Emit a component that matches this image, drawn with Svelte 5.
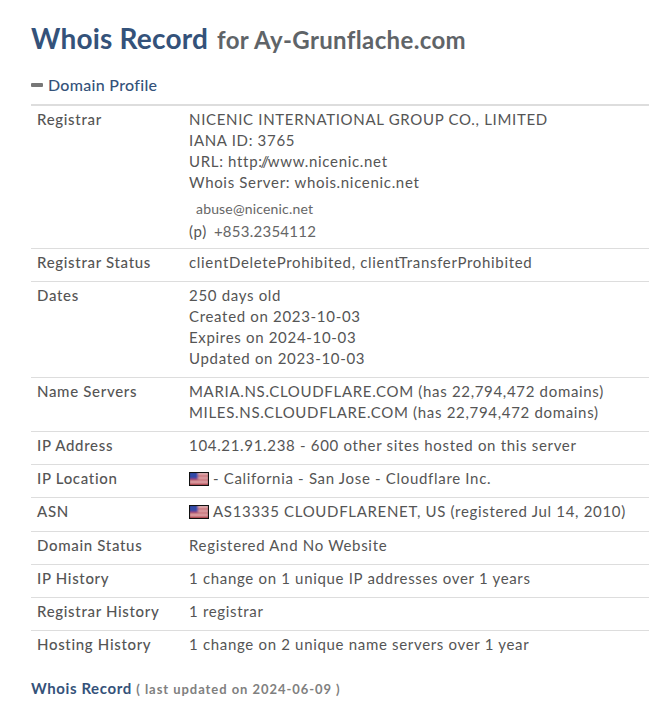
<script>
	const rows = [
		{ label: 'Registrar Status', lines: ['clientDeleteProhibited, clientTransferProhibited'] },
		{ label: 'Dates', lines: ['250 days old', 'Created on 2023-10-03', 'Expires on 2024-10-03', 'Updated on 2023-10-03'] },
		{ label: 'Name Servers', lines: ['MARIA.NS.CLOUDFLARE.COM (has 22,794,472 domains)', 'MILES.NS.CLOUDFLARE.COM (has 22,794,472 domains)'] },
		{ label: 'IP Address', lines: ['104.21.91.238 - 600 other sites hosted on this server'] },
		{ label: 'IP Location', flag: true, lines: ['- California - San Jose - Cloudflare Inc.'] },
		{ label: 'ASN', flag: true, lines: ['AS13335 CLOUDFLARENET, US (registered Jul 14, 2010)'] },
		{ label: 'Domain Status', lines: ['Registered And No Website'] },
		{ label: 'IP History', lines: ['1 change on 1 unique IP addresses over 1 years'] },
		{ label: 'Registrar History', lines: ['1 registrar'] },
		{ label: 'Hosting History', lines: ['1 change on 2 unique name servers over 1 year'] }
	];
</script>

{#snippet flag()}
	<svg class="flag" width="20" height="14" viewBox="0 0 20 14">
		<defs>
			<filter id="soft" x="0" y="0" width="1" height="1"><feGaussianBlur stdDeviation="1.3" /></filter>
			<clipPath id="inner"><rect x="1" y="1" width="18" height="12" /></clipPath>
		</defs>
		<rect width="20" height="14" fill="#111" />
		<g clip-path="url(#inner)">
			<g filter="url(#soft)">
				<rect x="0" y="0" width="20" height="14" fill="#eab8bc" />
				<rect x="0" y="3" width="20" height="2" fill="#b8404c" />
				<rect x="0" y="7" width="20" height="2" fill="#b8404c" />
				<rect x="0" y="11" width="20" height="3" fill="#b8404c" />
				<rect x="0" y="0" width="9" height="7" fill="#3248a8" />
			</g>
		</g>
	</svg>
{/snippet}

<main class="page">
	<h1><span class="blue">Whois Record</span> <small>for Ay-Grunflache.com</small></h1>

	<h2><span class="minus"></span>Domain Profile</h2>

	<div class="table">
		<div class="row first">
			<div class="label">Registrar</div>
			<div class="value">
				<div>NICENIC INTERNATIONAL GROUP CO., LIMITED</div>
				<div>IANA ID: 3765</div>
				<div>URL: http<span class="slashes">://</span>www.nicenic.net</div>
				<div>Whois Server: whois.nicenic.net</div>
				<div class="email">abuse@nicenic.net</div>
				<div class="phone"><span class="p">(p)</span><span class="num">+853.2354112</span></div>
			</div>
		</div>
		{#each rows as row}
			<div class="row">
				<div class="label">{row.label}</div>
				<div class="value">
					{#each row.lines as line}
						<div class:withflag={row.flag}>
							{#if row.flag}{@render flag()}{/if}{line}
						</div>
					{/each}
				</div>
			</div>
		{/each}
	</div>

	<p class="foot"><span class="blue">Whois Record</span> <span class="upd">( last updated on 2024-06-09 )</span></p>
</main>

<style>
	:global(body) {
		margin: 0;
		background: #fff;
	}
	.page {
		padding: 20px 0 0 31px;
		font-family: Lato, "Liberation Sans", sans-serif;
		color: #555;
		font-size: 15px;
		line-height: 21px;
		letter-spacing: 0.68px;
		height: 685px;
		overflow: hidden;
	}
	.blue {
		color: #34527a;
	}
	h1 {
		margin: 0;
		height: 36px;
		font-size: 28px;
		line-height: 36px;
		font-weight: 700;
		letter-spacing: 0.2px;
	}
	h1 small {
		font-size: 24px;
		line-height: 1;
		margin-left: 2px;
		color: #5f6468;
		letter-spacing: 0.36px;
	}
	h2 {
		margin: 18px 0 0;
		font-size: 16px;
		line-height: 22px;
		font-weight: 500;
		color: #34527a;
		display: flex;
		align-items: center;
		letter-spacing: 0.3px;
	}
	.minus {
		width: 12px;
		height: 4px;
		margin-right: 5px;
		border-radius: 1px;
		background: #777;
	}
	.table {
		margin-top: 8px;
		border-top: 2px solid #ddd;
	}
	.row {
		display: grid;
		grid-template-columns: 152px 1fr;
		padding: 3px 0 8.1px 6px;
		border-bottom: 1px solid #ddd;
	}
	.row.first {
		padding-bottom: 6px;
	}
	.row:last-child {
		border-bottom: 0;
	}
	.label {
		font-weight: 500;
		color: #555;
	}
	.value {
		color: #555;
		white-space: nowrap;
	}
	.slashes {
		letter-spacing: -1.5px;
	}
	.email {
		margin: 5px 0 0 7px;
		font-size: 14px;
		letter-spacing: 0.17px;
		line-height: 21px;
		color: #666;
	}
	.phone {
		display: flex;
		gap: 7px;
		margin-top: 2px;
		line-height: 21px;
	}
	.num {
		font-size: 15px;
		letter-spacing: 0.25px;
		color: #666;
	}
	.withflag {
		display: flex;
		align-items: center;
		gap: 4px;
	}
	.flag {
		flex: none;
		margin-top: 1px;
	}
	.foot {
		margin: 15px 0 0;
		line-height: 21px;
	}
	.foot .blue {
		font-weight: 700;
		letter-spacing: 0.6px;
	}
	.upd {
		font-size: 13px;
		font-weight: 700;
		color: #808080;
		letter-spacing: 0.95px;
	}
</style>
